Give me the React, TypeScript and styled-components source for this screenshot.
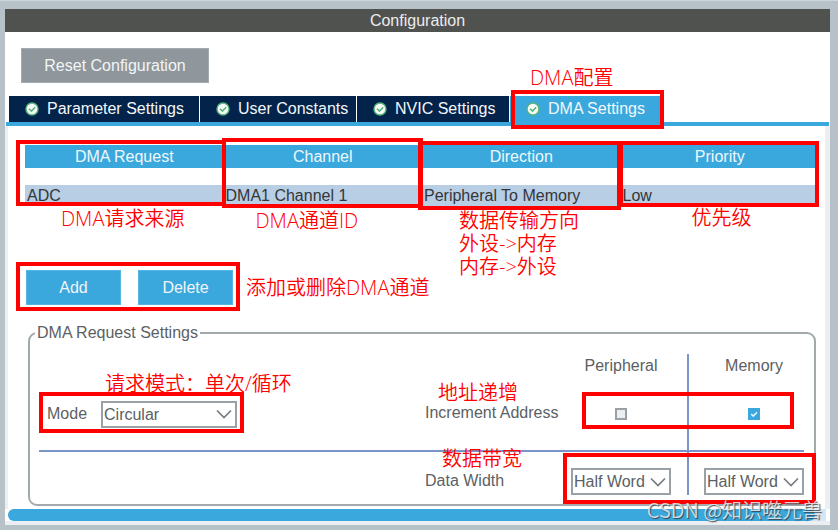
import React, { useState } from "react";
import styled, { createGlobalStyle } from "styled-components";

const blue = "#3aa8dc";
const navy = "#03234b";
const steel = "#8f979c";
const rule = "#7b95ca";

const GlobalStyle = createGlobalStyle`
  * { box-sizing: border-box; }
  body {
    margin: 0;
    background: #b7c1c8;
    color: #5c5f63;
    font: 16px/20px "Liberation Sans", Arial, sans-serif;
  }
  button, select, input { font: inherit; color: inherit; margin: 0; }
`;

const Page = styled.main`
  border-top: 1px solid #ccd5db;
  padding: 8px 8px 4px 5px;
`;

const Panel = styled.section`
  position: relative;
  background: #ffffff;
`;

const TitleBar = styled.h1`
  margin: 0;
  height: 23px;
  background: #505250;
  color: #ececec;
  font-size: 16px;
  font-weight: 400;
  line-height: 23px;
  text-align: center;
`;

const Toolbar = styled.div`
  padding: 16px 16px 13px;
`;

const Button = styled.button<{ $tone?: string; $width: number }>`
  width: ${(p) => p.$width}px;
  height: 35px;
  padding: 0;
  border: 1px solid ${(p) => (p.$tone ? "#a3abb0" : "#56b5e1")};
  background: ${(p) => p.$tone ?? blue};
  color: #f2f5f7;
`;

const TabList = styled.div`
  display: grid;
  grid-template-columns: 190px 156px 152px 152px;
  gap: 1px;
  margin: 0 1px;
  padding-left: 3px;
  border-bottom: 4px solid ${blue};
`;

const Tab = styled.button<{ $active: boolean }>`
  position: relative;
  display: flex;
  align-items: center;
  gap: 8px;
  height: 26px;
  padding: 0 0 0 16px;
  border: 0;
  background: ${(p) => (p.$active ? blue : navy)};
  color: #f4f7fa;
  white-space: nowrap;
`;

const TabPanel = styled.div`
  padding: 19px 7px 3px 17px;
  border: solid #eceff1;
  border-width: 0 5px 0 3px;
`;

const TableArea = styled.div`
  margin-right: -1px;
`;

const DataTable = styled.table`
  width: 100%;
  table-layout: fixed;
  border-collapse: collapse;

  tbody::before {
    content: "";
    display: table-row;
    height: 17px;
  }
`;

const HeadCell = styled.th`
  position: relative;
  height: 23px;
  padding: 0;
  background: ${blue};
  color: #eef8fd;
  font-weight: 400;
`;

const Cell = styled.td`
  height: 21px;
  padding: 1px 0 0 2px;
  background: #b8cee4;
  color: #333639;
  line-height: 20px;
`;

const Actions = styled.div`
  position: relative;
  display: flex;
  gap: 17px;
  width: fit-content;
  margin: 64px 0 18px 1px;
`;

const Settings = styled.fieldset`
  margin: 0 2px 0 3px;
  padding: 11px 10px 9px 9px;
  border: 2px solid #a3aaae;
  border-radius: 9px;
  min-width: 0;

  legend {
    margin-left: -4px;
    padding: 0 2px;
  }
`;

const SettingsGrid = styled.div`
  position: relative;
  display: grid;
  grid-template-columns: 1fr 146px 100px 33px 100px;
  grid-template-rows: 24px 72px 2px 43px;
  align-items: center;
`;

const ColumnTitle = styled.span<{ $column: number }>`
  grid-column: ${(p) => p.$column};
  grid-row: 1;
  justify-self: center;
`;

const HorizontalRule = styled.div`
  grid-column: 1 / -1;
  grid-row: 3;
  height: 2px;
  background: ${rule};
`;

const VerticalRule = styled.div`
  grid-column: 4;
  grid-row: 1 / -1;
  justify-self: center;
  align-self: stretch;
  width: 2px;
  background: ${rule};
`;

const ModeField = styled.div`
  grid-column: 1;
  grid-row: 2;
  display: flex;
  align-items: center;
  gap: 14px;
  padding-left: 8px;
`;

const RowTitle = styled.span<{ $row: number }>`
  grid-column: 2;
  grid-row: ${(p) => p.$row};
  margin-top: ${(p) => (p.$row === 4 ? "14px" : "0")};
  margin-bottom: ${(p) => (p.$row === 4 ? "0" : "2px")};
`;

const WidthField = styled.div<{ $column: number }>`
  grid-column: ${(p) => p.$column};
  grid-row: 4;
  margin-top: 16px;
`;

const SelectFrame = styled.span<{ $width: number }>`
  display: grid;
  align-items: center;
  width: ${(p) => p.$width}px;
  height: 27px;

  select {
    grid-area: 1 / 1;
    appearance: none;
    width: 100%;
    height: 27px;
    padding: 1px 0 0 1px;
    border: 2px solid #9aa1a6;
    border-radius: 0;
    background: #ffffff;
  }
  svg {
    grid-area: 1 / 1;
    justify-self: end;
    margin-right: 5px;
    pointer-events: none;
  }
`;

const CheckFrame = styled.span<{ $column: number }>`
  grid-column: ${(p) => p.$column};
  grid-row: 2;
  justify-self: center;
  display: grid;

  input {
    grid-area: 1 / 1;
    appearance: none;
    width: 12px;
    height: 12px;
    border: 2px solid #9aa1a6;
    background: #eceff1;
  }
  input:checked {
    border-color: ${blue};
    background: ${blue};
  }
  svg {
    grid-area: 1 / 1;
    pointer-events: none;
  }
`;

const ScrollTrack = styled.div`
  margin: 0 4px 0 3px;
  padding-right: 11px;
  border-radius: 6px 0 0 6px;
  background: #d5e6f5;
`;

const ScrollThumb = styled.div`
  height: 12px;
  border-radius: 6px;
  background: ${blue};
`;

const PanelFoot = styled.div`
  height: 4px;
  background: #eceff1;
`;

/* Red outline drawn over the area it calls out. */
const Mark = styled.span<{ $inset: string }>`
  position: absolute;
  z-index: 1;
  inset: ${(p) => p.$inset};
  border: 4px solid #ff0000;
  pointer-events: none;
`;

/* Red caption next to a mark. */
const Note = styled.span<{ $top: number; $left: number }>`
  position: absolute;
  z-index: 2;
  top: ${(p) => p.$top}px;
  left: ${(p) => p.$left}px;
  color: #ff0000;
  font: 350 20px/23px "Open Sans", "Noto Sans CJK SC", sans-serif;
  text-align: left;
  white-space: pre;
  pointer-events: none;
`;

const Watermark = styled.span`
  position: absolute;
  z-index: 3;
  right: 8px;
  bottom: 1px;
  color: rgba(235, 240, 244, 0.85);
  font: 350 20px/28px "Noto Sans CJK SC", sans-serif;
  text-shadow: 1px 1px 1px rgba(50, 60, 68, 0.9);
`;

const StatusIcon = () => (
  <svg width="14" height="14" viewBox="0 0 14 14" aria-hidden="true">
    <circle cx="7" cy="7" r="6" fill="#f6fbf6" stroke="#58b47c" strokeWidth="1.4" />
    <path d="M4 6.8 6.4 9.1 10.2 5.2" fill="none" stroke="#58b47c" strokeWidth="1.5" />
  </svg>
);

const Chevron = () => (
  <svg width="16" height="10" viewBox="0 0 16 10" aria-hidden="true">
    <path d="M1 1.5 8 8.5 15 1.5" fill="none" stroke="#777b7f" strokeWidth="1.7" />
  </svg>
);

interface SelectProps {
  id?: string;
  label?: string;
  width: number;
  options: string[];
}

const Select = ({ id, label, width, options }: SelectProps) => (
  <SelectFrame $width={width}>
    <select id={id} aria-label={label}>
      {options.map((o) => (
        <option key={o}>{o}</option>
      ))}
    </select>
    <Chevron />
  </SelectFrame>
);

const Check = ({ column, label, initial }: { column: number; label: string; initial: boolean }) => {
  const [on, setOn] = useState(initial);
  return (
    <CheckFrame $column={column}>
      <input type="checkbox" aria-label={label} checked={on} onChange={() => setOn(!on)} />
      {on && (
        <svg width="12" height="12" viewBox="0 0 12 12" aria-hidden="true">
          <path d="M3.2 6 5.2 8 9 4.2" fill="none" stroke="#e8f6fd" strokeWidth="1.6" />
        </svg>
      )}
    </CheckFrame>
  );
};

const tabs = ["Parameter Settings", "User Constants", "NVIC Settings", "DMA Settings"];

const columns = [
  { title: "DMA Request", value: "ADC", mark: "-5px -2px -38px -9px", note: "DMA请求来源", top: 62, left: 36 },
  { title: "Channel", value: "DMA1 Channel 1", mark: "-7px -1px -40px -2px", note: "DMA通道ID", top: 64, left: 32 },
  {
    title: "Direction",
    value: "Peripheral To Memory",
    mark: "-4px 0 -42px -4px",
    note: "数据传输方向\n外设->内存\n内存->外设",
    top: 64,
    left: 37,
  },
  { title: "Priority", value: "Low", mark: "-4px 0 -39px -2px", note: "优先级", top: 61, left: 71 },
];

const widths = ["Half Word", "Byte", "Word"];

export default function App() {
  const [active, setActive] = useState("DMA Settings");

  return (
    <>
      <GlobalStyle />
      <Page>
        <Panel>
          <TitleBar>Configuration</TitleBar>
          <Toolbar>
            <Button type="button" $tone={steel} $width={188}>
              Reset Configuration
            </Button>
          </Toolbar>
          <TabList role="tablist">
            {tabs.map((name) => (
              <Tab
                key={name}
                type="button"
                role="tab"
                aria-selected={name === active}
                $active={name === active}
                onClick={() => setActive(name)}
              >
                <StatusIcon />
                {name}
                {name === "DMA Settings" && (
                  <>
                    <Mark $inset="-6px -2px -7px 1px" />
                    <Note $top={-30} $left={20}>
                      DMA配置
                    </Note>
                  </>
                )}
              </Tab>
            ))}
          </TabList>
          <TabPanel role="tabpanel">
            <TableArea>
              <DataTable>
                <thead>
                  <tr>
                    {columns.map((c) => (
                      <HeadCell key={c.title} scope="col">
                        {c.title}
                        <Mark $inset={c.mark} />
                        <Note $top={c.top} $left={c.left}>
                          {c.note}
                        </Note>
                      </HeadCell>
                    ))}
                  </tr>
                </thead>
                <tbody>
                  <tr>
                    {columns.map((c) => (
                      <Cell key={c.title}>{c.value}</Cell>
                    ))}
                  </tr>
                </tbody>
              </DataTable>
            </TableArea>
            <Actions>
              <Button type="button" $width={95}>
                Add
              </Button>
              <Button type="button" $width={95}>
                Delete
              </Button>
              <Mark $inset="-8px -7px -6px -10px" />
              <Note $top={6} $left={220}>
                添加或删除DMA通道
              </Note>
            </Actions>
            <Settings>
              <legend>DMA Request Settings</legend>
              <SettingsGrid>
                <ColumnTitle $column={3}>Peripheral</ColumnTitle>
                <ColumnTitle $column={5}>Memory</ColumnTitle>
                <ModeField>
                  <label htmlFor="mode">Mode</label>
                  <Select id="mode" width={136} options={["Circular", "Normal"]} />
                </ModeField>
                <RowTitle $row={2}>Increment Address</RowTitle>
                <Check column={3} label="Increment Address, Peripheral" initial={false} />
                <Check column={5} label="Increment Address, Memory" initial />
                <HorizontalRule />
                <VerticalRule />
                <RowTitle $row={4}>Data Width</RowTitle>
                <WidthField $column={3}>
                  <Select label="Data Width, Peripheral" width={100} options={widths} />
                </WidthField>
                <WidthField $column={5}>
                  <Select label="Data Width, Memory" width={100} options={widths} />
                </WidthField>
                <Mark $inset="38px calc(100% - 205px) 62px 0" />
                <Mark $inset="38px 10px 66px calc(100% - 222px)" />
                <Mark $inset="99px -12px -9px calc(100% - 241px)" />
                <Note $top={18} $left={66}>
                  请求模式：单次/循环
                </Note>
                <Note $top={27} $left={399}>
                  地址递增
                </Note>
                <Note $top={93} $left={403}>
                  数据带宽
                </Note>
              </SettingsGrid>
            </Settings>
          </TabPanel>
          <ScrollTrack>
            <ScrollThumb />
          </ScrollTrack>
          <PanelFoot />
          <Watermark>CSDN @知识噬元兽</Watermark>
        </Panel>
      </Page>
    </>
  );
}
